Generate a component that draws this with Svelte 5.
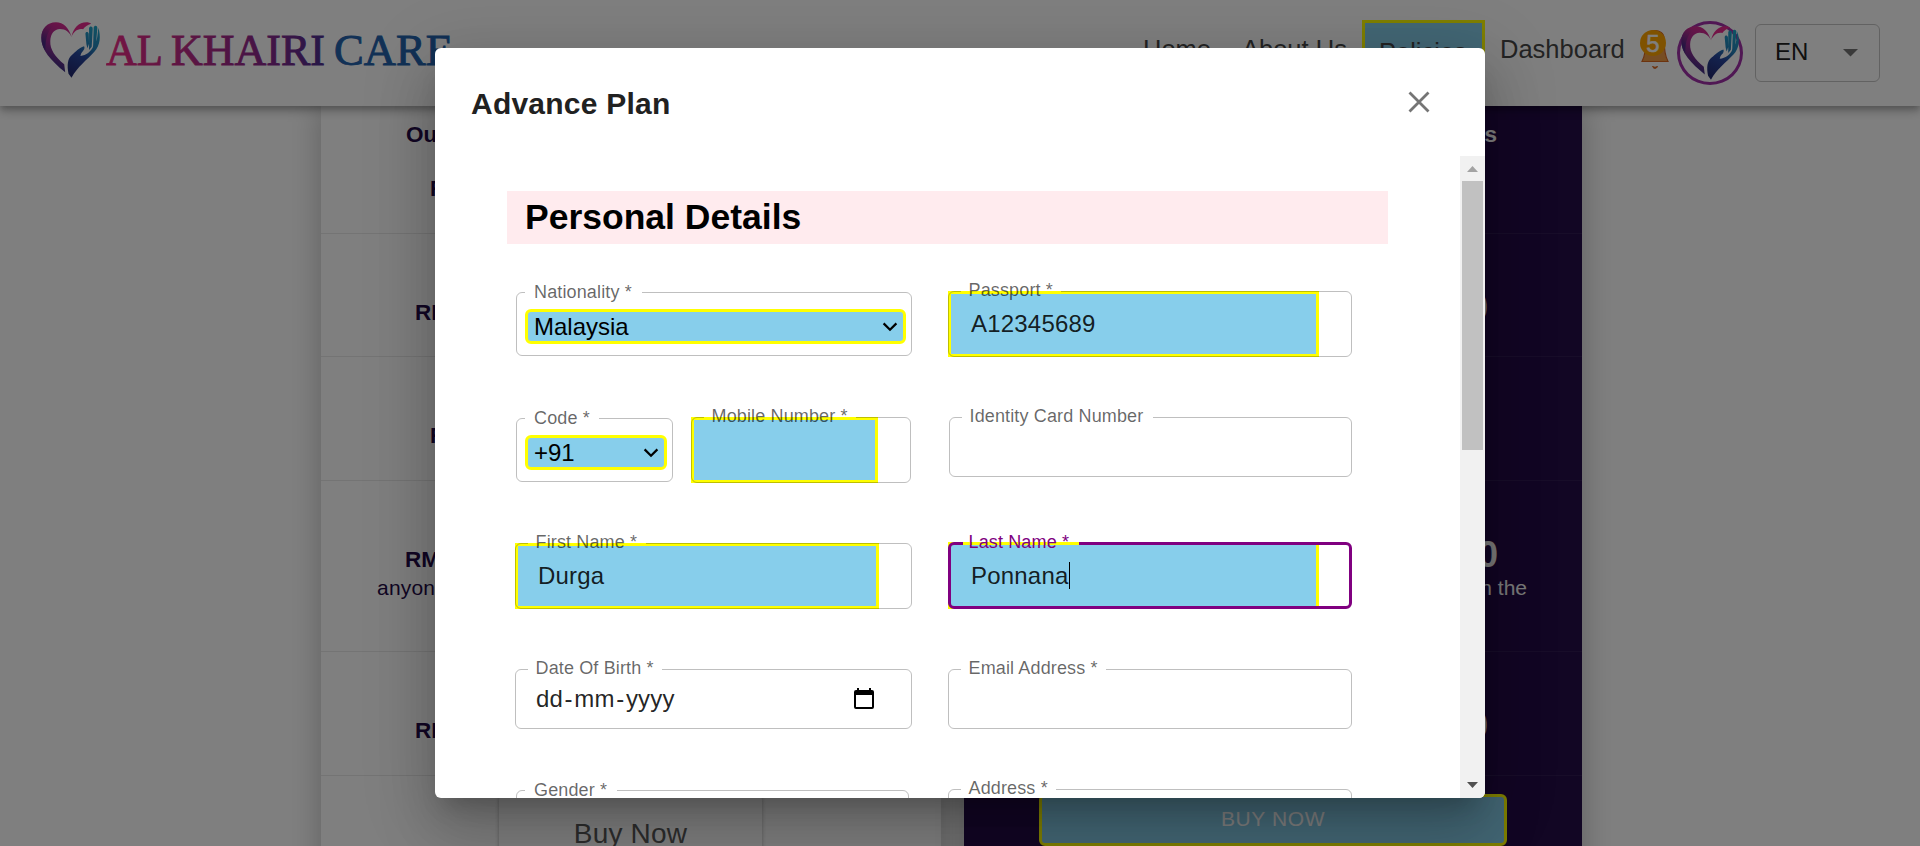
<script>
  const leftRows = [
    { h: 81, pad: 23, x: 109, text: 'RM' },
    { h: 123, pad: 66, x: 94, text: 'RM' },
    { h: 124, pad: 66, x: 109, text: 'R' },
    { h: 171, pad: 66, x: 84, text: 'RM', sub: 'anyone' },
    { h: 124, pad: 66, x: 94, text: 'RM' }
  ];
  const rightRows = [
    { h: 81 },
    { h: 123, pad: 56, x: 94, text: '0' },
    { h: 124 },
    { h: 171, pad: 56, x: 84, text: '0', sub: 'n the' },
    { h: 124, pad: 56, x: 94, text: '0' }
  ];

  // dx/dy: offset inside the grid cell; notch: start and width of the label gap
  const fields = [
    { label: 'Nationality *', kind: 'select', value: 'Malaysia', dx: 1, dy: 1, w: 396, h: 64, notch: [9, 117], lx: 19 },
    { label: 'Passport *', kind: 'input', value: 'A12345689', w: 404, h: 66, hl: 371, notch: [13, 100], lx: 21.5 },
    { pair: [
      { label: 'Code *', kind: 'select', value: '+91', dx: 1, dy: 1, w: 157, h: 64, notch: [9, 74], lx: 19 },
      { label: 'Mobile Number *', kind: 'input', value: '', dx: 18, w: 220, h: 66, hl: 187, notch: [13, 152], lx: 21.5 }
    ] },
    { label: 'Identity Card Number', kind: 'plain', value: '', dx: 1, w: 403, h: 60, notch: [13, 191], lx: 21.5 },
    { label: 'First Name *', kind: 'input', value: 'Durga', w: 397, h: 66, hl: 364, notch: [13, 118], lx: 21.5 },
    { label: 'Last Name *', kind: 'input', value: 'Ponnana', focus: true, w: 404, h: 67, hl: 371, dy: -1, notch: [15, 116], lx: 21.5 },
    { label: 'Date Of Birth *', kind: 'date', value: '', w: 397, h: 60, notch: [13, 134], lx: 21.5 },
    { label: 'Email Address *', kind: 'plain', value: '', w: 404, h: 60, notch: [13, 145], lx: 21.5 },
    { label: 'Gender *', kind: 'plain', value: '', dx: 1, dy: -5, ly: 1, w: 393, h: 64, notch: [9, 92], lx: 19 },
    { label: 'Address *', kind: 'plain', value: '', dy: -6, w: 404, h: 66, notch: [13, 95], lx: 21.5 }
  ];
</script>

{#snippet heart(id, w, h)}
  <svg class="heart" width={w} height={h} viewBox="122 65 178 168" preserveAspectRatio="none">
    <defs>
      <linearGradient id="{id}-ring" gradientUnits="userSpaceOnUse" x1="225" y1="70" x2="160" y2="215">
        <stop offset="0" stop-color="#e62b8f" />
        <stop offset="0.5" stop-color="#9c2a92" />
        <stop offset="1" stop-color="#29307f" />
      </linearGradient>
      <linearGradient id="{id}-edge" gradientUnits="userSpaceOnUse" x1="160" y1="75" x2="128" y2="125">
        <stop offset="0" stop-color="#8b2a82" stop-opacity="0" />
        <stop offset="1" stop-color="#4a2a84" />
      </linearGradient>
      <linearGradient id="{id}-hand" gradientUnits="userSpaceOnUse" x1="288" y1="78" x2="215" y2="220">
        <stop offset="0" stop-color="#1fa5c8" />
        <stop offset="0.4" stop-color="#2380b8" />
        <stop offset="0.62" stop-color="#27459c" />
        <stop offset="1" stop-color="#232a72" />
      </linearGradient>
    </defs>
    <path fill="url(#{id}-ring)" d="M214 110C207 84 190 66 167 66 140 66 123 86 123 112c0 38 28 67 72 104l-3-24C164 168 149 148 150 122c1-22 12-35 29-36 18 0 29 10 35 24z" />
    <path fill="url(#{id}-edge)" d="M172 66c-31-2-49 20-49 46 0 14 4 27 12 39 0-40 8-66 37-85z" />
    <path fill="#e62b8f" d="M214 110c5-26 22-44 45-44 6 0 11 2 14 4-10 3-19 9-24 17-16-4-29 8-35 23z" />
    <path fill="url(#{id}-hand)" d="M256 100c0-7 9-7 10 0l1 30-5 14-3-12zM267 84c1-7 11-7 11 1l-3 54-8 10zM281 81c2-7 11-6 11 2l-4 46-9 17z" />
    <path fill="url(#{id}-hand)" d="M214 232l-9-12c-5-26-3-46 11-57 12-9 18-19 36-25 3 5 0 11-5 16-4 4-5 8-6 13 18-2 31-12 39-29 8-12 12-24 13-38l2-18c8 26 6 52-12 72-22 24-51 45-69 78z" />
  </svg>
{/snippet}

{#snippet field(f)}
  <div class="field {f.kind}" class:focus={f.focus}
    style="width:{f.w}px;height:{f.h}px;margin-left:{f.dx ?? 0}px;margin-top:{f.dy ?? 0}px">
    {#if f.kind === 'select'}
      <div class="picker">
        <span>{f.value}</span>
        <svg width="16" height="10" viewBox="0 0 16 10"><path d="M1.6 1.4L8 7.8l6.400-6.400" fill="none" stroke="#000" stroke-width="2.200" /></svg>
      </div>
    {:else if f.kind === 'input'}
      <div class="mark" style="width:{f.hl}px">
        <span>{f.value}</span>{#if f.focus}<i class="caret"></i>{/if}
      </div>
    {:else if f.kind === 'date'}
      <div class="date-value">
        <span>dd</span><span class="dash">-</span><span>mm</span><span class="dash">-</span><span>yyyy</span>
        <svg width="20" height="22" viewBox="0 0 20 22">
          <path fill="#000" fill-rule="evenodd" d="M3 0h2v2h10V0h2v2h1a2 2 0 0 1 2 2v15a2 2 0 0 1-2 2H2a2 2 0 0 1-2-2V4a2 2 0 0 1 2-2h1zM2 7v12h16V7z" />
        </svg>
      </div>
    {/if}
    <fieldset><legend style="width:{f.notch[1]}px;margin-left:{f.notch[0] - (f.focus ? 3 : 1)}px"></legend></fieldset>
    <span class="label" style="left:{f.lx - 1}px;margin-top:{f.ly ?? 0}px">{f.label}</span>
  </div>
{/snippet}

<div class="page">
  <header>
    <div class="brand">
      {@render heart('logo', 59, 56)}
      <svg class="word" width="360" height="66" viewBox="0 0 360 66">
        <defs>
          <linearGradient id="word" gradientUnits="userSpaceOnUse" x1="0" y1="0" x2="220" y2="0">
            <stop offset="0" stop-color="#ec2a86" />
            <stop offset="0.4" stop-color="#b52a86" />
            <stop offset="0.75" stop-color="#86288c" />
            <stop offset="1" stop-color="#4a2f90" />
          </linearGradient>
        </defs>
        <g font-family="Liberation Serif, serif" font-size="43.500" stroke-width="0.900">
          <g fill="url(#word)" stroke="url(#word)">
            <text x="0" y="45" textLength="57" lengthAdjust="spacingAndGlyphs">AL</text>
            <text x="65" y="45" textLength="154" lengthAdjust="spacingAndGlyphs">KHAIRI</text>
          </g>
          <text x="228" y="45" fill="#2463ad" stroke="#2463ad" textLength="119" lengthAdjust="spacingAndGlyphs">CARE</text>
        </g>
      </svg>
    </div>
    <nav>
      <a class="home">Home</a>
      <a class="about">About Us</a>
      <a class="policies">Policies</a>
      <a class="dash-link">Dashboard</a>
    </nav>
    <div class="bell">
      <svg width="30" height="50" viewBox="0 0 30 50">
        <path d="M6 18C6 8 24 8 24 18c0 12 1 18 4 23.500H2C5 36 6 30 6 18z" fill="#ef9a45" stroke="#d9661f" stroke-width="1.200" />
        <path d="M12.500 46.500c1 2.500 4 2.500 5 0l-2.500.8z" fill="#d9661f" stroke="#d9661f" />
      </svg>
      <span class="badge">5</span>
    </div>
    <div class="avatar">{@render heart('avatar', 58, 54)}</div>
    <div class="lang"><span>EN</span><svg width="15" height="8" viewBox="0 0 15 8"><path d="M0 0h15L7.500 7.500z" fill="#757575" /></svg></div>
  </header>

  <main>
    <section class="card light">
      <h4>Our</h4>
      {#each leftRows as r}
        <div class="row" style="height:{r.h}px;padding-top:{r.pad}px;padding-left:{r.x}px">
          <b>{r.text}</b>
          {#if r.sub}<p>{r.sub}</p>{/if}
        </div>
      {/each}
      <div class="buy-plain">Buy Now</div>
    </section>
    <section class="card dark">
      <h4>s</h4>
      {#each rightRows as r}
        <div class="row" style="height:{r.h}px;padding-top:{r.pad ?? 0}px;padding-right:{r.x ?? 0}px">
          {#if r.text}<b>{r.text}</b>{/if}
          {#if r.sub}<p>{r.sub}</p>{/if}
        </div>
      {/each}
      <div class="buy-marked">BUY NOW</div>
    </section>
  </main>

  <div class="backdrop">
    <div class="dialog">
      <div class="title">
        <h2>Advance Plan</h2>
        <svg width="22" height="22" viewBox="0 0 22 22"><path d="M1.500 1.500l19 19M20.500 1.500l-19 19" stroke="#757575" stroke-width="2.800" /></svg>
      </div>
      <div class="content">
        <div class="form">
          <h3>Personal Details</h3>
          <div class="grid">
            {#each fields as f}
              {#if f.pair}
                <div class="pair">{#each f.pair as p}{@render field(p)}{/each}</div>
              {:else}
                {@render field(f)}
              {/if}
            {/each}
          </div>
        </div>
        <div class="scroll">
          <svg width="11" height="6" viewBox="0 0 11 6"><path d="M0 6h11L5.500 0z" fill="#a3a3a3" /></svg>
          <div class="thumb"></div>
          <svg class="down" width="11" height="6" viewBox="0 0 11 6"><path d="M0 0h11L5.500 6z" fill="#505050" /></svg>
        </div>
      </div>
    </div>
  </div>
</div>

<style>
  :global(body) { overflow: hidden; background: #fff; }
  .page, .page * { box-sizing: border-box; }
  h2, h3, h4, p { margin: 0; }
  .page {
    position: relative;
    width: 1920px;
    height: 846px;
    overflow: hidden;
    font-family: "Liberation Sans", Arial, sans-serif;
  }
  svg { display: block; flex: none; }

  header {
    position: relative;
    z-index: 1;
    display: flex;
    align-items: flex-start;
    height: 106px;
    padding-left: 41px;
    background: #fff;
    box-shadow: 0 3px 6px -1px rgba(0,0,0,.2), 0 6px 8px rgba(0,0,0,.14), 0 2px 15px rgba(0,0,0,.12);
  }
  .brand { display: flex; width: 1102px; padding-top: 20px; gap: 6px; }
  .brand :global(.heart) { margin-top: 2px; }
  .heart { overflow: visible; }
  nav { display: flex; align-items: flex-start; }
  nav a { color: #474747; font-size: 25.500px; line-height: 30px; white-space: nowrap; margin-top: 34px; }
  .home { width: 99px; }
  .about { width: 120px; }
  nav .policies {
    width: 123px;
    height: 66px;
    margin-top: 20px;
    padding: 14px 0 0 14px;
    border: 3px solid #ff0;
    background: #87ceeb;
  }
  .dash-link { width: 140px; margin-left: 15px; }
  .bell { position: relative; width: 30px; margin-top: 20px; }
  .badge {
    position: absolute;
    left: 0;
    top: 10px;
    width: 26px;
    height: 26px;
    border-radius: 50%;
    background: #ffa500;
    color: #fff;
    font-size: 24px;
    line-height: 28px;
    text-align: center;
    -webkit-text-stroke: .5px #fff;
  }
  .avatar {
    display: flex;
    justify-content: center;
    width: 66px;
    height: 64px;
    margin: 21px 0 0 7px;
    padding-top: 2px;
    border: 3px solid #a030a8;
    border-radius: 50%;
  }
  .lang {
    display: flex;
    align-items: center;
    justify-content: space-between;
    width: 125px;
    height: 58px;
    margin: 24px 0 0 12px;
    padding: 0 21px 0 19px;
    border: 1px solid #c4c4c4;
    border-radius: 6px;
    color: #212121;
    font-size: 24px;
  }
  .lang span { padding-bottom: 2px; }

  main { display: flex; gap: 23px; padding-left: 321px; }
  .card { height: 780px; box-shadow: 0 0 30px rgba(0,0,0,.25); }
  .card h4 { height: 47px; padding-top: 16px; font-size: 22.500px; line-height: 26px; }
  .row { border-bottom: 1px solid rgba(0,0,0,.09); color: #250d49; }
  .row b { display: block; font-size: 22.500px; line-height: 26px; }
  .row p { padding-top: 1px; font-size: 21px; line-height: 28px; }
  .light { width: 620px; color: #250d49; background: #fff; }
  .light h4 { padding-left: 85px; }
  .light .row p { margin-left: -28px; letter-spacing: .2px; }
  .dark { width: 618px; color: #fff; background: #250d49; text-align: right; }
  .dark h4 { padding-right: 85px; }
  .dark .row { color: #f4f4f4; border-color: rgba(255,255,255,.06); }
  .dark .row b { font-size: 36px; line-height: 36px; }
  .dark .row p { margin-right: -29px; }
  .buy-plain {
    width: 263px;
    height: 80px;
    margin: 18px 0 0 178px;
    padding-top: 23px;
    border-radius: 6px;
    box-shadow: 0 0 4px rgba(0,0,0,.3);
    color: #5a5a5a;
    font-size: 28px;
    line-height: 34px;
    letter-spacing: .2px;
    text-align: center;
  }
  .buy-marked {
    width: 468px;
    height: 52px;
    margin: 18px 0 0 75px;
    border: 3px solid #ff0;
    border-radius: 6px;
    background: #87ceeb;
    color: #fff;
    font-size: 21px;
    line-height: 44px;
    letter-spacing: .6px;
    text-align: center;
  }

  .backdrop {
    position: absolute;
    z-index: 2;
    inset: 0;
    display: flex;
    align-items: center;
    justify-content: center;
    background: rgba(0,0,0,.5);
  }
  .dialog {
    display: flex;
    flex-direction: column;
    width: 1050px;
    height: 750px;
    overflow: hidden;
    border-radius: 6px;
    background: #fff;
    box-shadow: 0 16px 22px -10px rgba(0,0,0,.2), 0 36px 57px 4px rgba(0,0,0,.14), 0 14px 69px 12px rgba(0,0,0,.12);
  }
  .title {
    display: flex;
    justify-content: space-between;
    height: 108px;
    padding: 36px 55px 0 36px;
  }
  .title svg { margin-top: 7px; }
  h2 { color: #212121; font-size: 30px; line-height: 40px; letter-spacing: .225px; }
  .content { display: flex; height: 642px; }
  .form { width: 1025px; padding: 35px 72px 0; }
  h3 {
    height: 53px;
    padding-left: 18px;
    background: #ffebee;
    color: #000;
    font-size: 35.500px;
    line-height: 52px;
  }
  .grid {
    display: grid;
    grid-template-columns: 397px 404px;
    grid-auto-rows: 126px;
    column-gap: 36px;
    align-items: start;
    padding: 47px 0 0 8px;
  }
  .pair { display: flex; align-items: flex-start; }
  .field { position: relative; flex: none; }
  fieldset {
    position: absolute;
    inset: 0;
    min-width: 0;
    margin: 0;
    padding: 0;
    border: 1px solid rgba(0,0,0,.25);
    border-radius: 6px;
  }
  legend { height: 1px; padding: 0; }
  .focus fieldset { border: 3px solid purple; }
  .label {
    position: absolute;
    top: -11px;
    color: rgba(0,0,0,.6);
    font-size: 18px;
    line-height: 20px;
    letter-spacing: .14px;
    white-space: nowrap;
  }
  .select .label { top: -10px; }
  .focus .label { top: -10px; color: purple; }
  .picker {
    display: flex;
    align-items: center;
    justify-content: space-between;
    height: 35px;
    margin: 0 6px 0 9px;
    padding: 0 5px 0 6px;
    border: 3px solid #ff0;
    border-radius: 6px;
    background: #87ceeb;
    color: #000;
    font-size: 24px;
    line-height: 28px;
  }
  .select { padding-top: 17px; }
  .mark {
    display: flex;
    align-items: center;
    height: 66px;
    padding: 0 0 0 20px;
    border: 3px solid #ff0;
    background: #87ceeb;
    color: rgba(0,0,0,.87);
    font-size: 24px;
    line-height: 28px;
    letter-spacing: .2px;
  }
  .focus .mark { height: 67px; }
  .caret { width: 1px; height: 27px; background: #000; }
  .date-value {
    display: flex;
    align-items: center;
    height: 60px;
    padding-left: 21px;
    color: rgba(0,0,0,.87);
    font-size: 24px;
    letter-spacing: .2px;
  }
  .dash { padding: 0 1.500px; }
  .date-value svg { margin: 0 38px 0 auto; }
  .scroll {
    display: flex;
    flex-direction: column;
    align-items: center;
    width: 25px;
    height: 642px;
    padding: 10px 0;
    background: #f1f1f1;
  }
  .thumb { width: 21px; height: 269px; margin-top: 9px; background: #c1c1c1; }
  .down { margin-top: auto; }
</style>
